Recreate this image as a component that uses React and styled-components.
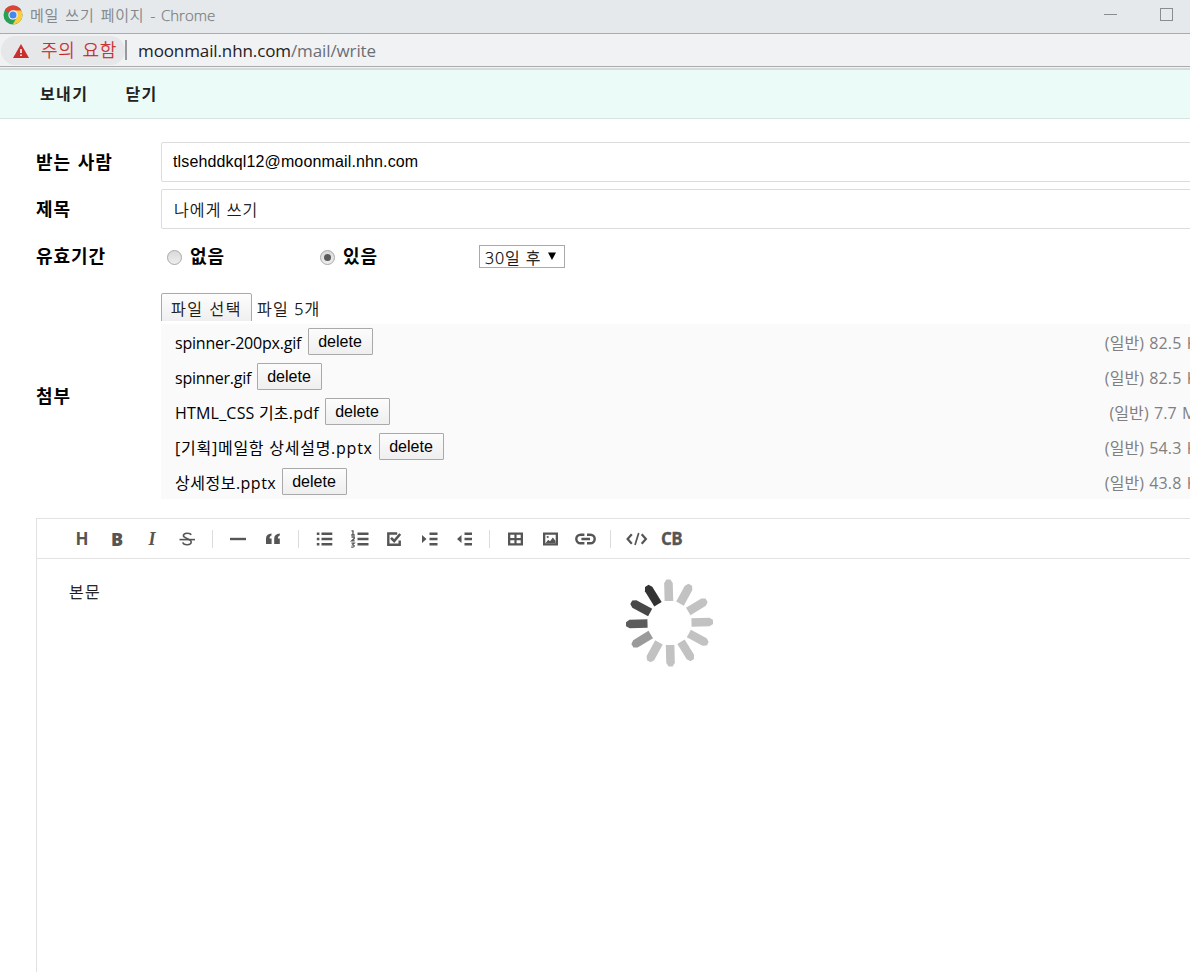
import React from "react";
import styled, { createGlobalStyle } from "styled-components";

const GlobalStyle = createGlobalStyle`
  *, *::before, *::after { box-sizing: border-box; }
  html, body { margin: 0; height: 100%; overflow: hidden; background: #fff; }
  body { font-family: "Open Sans", "Noto Sans CJK KR", sans-serif; color: #000; font-size: 16px; }
`;

const Viewport = styled.div`
  width: 100%;
  height: 972px;
  overflow: hidden;
`;

const Window = styled.div`
  display: flex;
  flex-direction: column;
  width: 1250px;
  height: 100%;
`;

const Label = styled.span`
  display: block;
  flex: none;
  white-space: pre;
  line-height: 24px;
  font-size: ${(p) => p.$size || 16}px;
  font-weight: ${(p) => p.$weight || 400};
  color: ${(p) => p.$color || "inherit"};
  letter-spacing: ${(p) => p.$ls || 0}px;
  word-spacing: ${(p) => p.$ws || 0}px;
  -webkit-text-stroke: ${(p) => (p.$weight === 300 ? 0.25 : 0)}px currentColor;
`;

const TitleBar = styled.div`
  display: flex;
  align-items: center;
  flex: none;
  height: 34px;
  padding: 0 0 4px 3px;
  background: #e5e9ec;
  border-bottom: 1px solid #ababad;
`;

const WindowTitle = styled(Label)`
  margin-left: 7px;
`;

const AppName = styled.span`
  letter-spacing: 0;
`;

const WindowButtons = styled.div`
  display: flex;
  align-items: center;
  gap: 43px;
  margin-left: auto;
  padding-right: 77px;
`;

const Minimize = styled.span`
  width: 13px;
  height: 1px;
  background: #8a8d8f;
`;

const Maximize = styled.span`
  width: 13px;
  height: 13px;
  border: 1px solid #8a8d8f;
`;

const AddressBar = styled.div`
  display: flex;
  align-items: center;
  flex: none;
  height: 33px;
  background: #f1f2f4;
  border-bottom: 1px solid #ababad;
`;

const Warning = styled.div`
  display: flex;
  align-items: center;
  width: 124px;
  height: 29px;
  margin-left: 1px;
  padding: 2px 0 0 12px;
  border-radius: 15px;
  background: #e6e7e9;
`;

const WarningText = styled(Label)`
  margin: -3px 0 0 12px;
`;

const Divider = styled.span`
  width: 2px;
  height: 20px;
  margin-right: 11px;
  background: #97989b;
`;

const Address = styled(Label)`
  padding-top: 2px;
`;

const Path = styled.span`
  color: #6b6e72;
`;

const ChromeEdge = styled.div`
  flex: none;
  height: 3px;
  background: #d6dadb;
  border-top: 1px solid #f1f2f4;
`;

const ActionBar = styled.nav`
  display: flex;
  align-items: center;
  flex: none;
  gap: 37px;
  height: 49px;
  padding-left: 40px;
  background: #ebfbf8;
  border-bottom: 1px solid #d5e6e2;
`;

const Form = styled.form`
  display: flex;
  flex-direction: column;
  flex: none;
  gap: 7px;
  padding: 23px 0 0 36px;
`;

const FormRow = styled.div`
  display: grid;
  grid-template-columns: 125px 1fr;
  align-items: center;
  min-height: 40px;
`;

const AttachmentRow = styled(FormRow)`
  margin-top: 10px;
`;

const Field = styled.div`
  display: flex;
  align-items: center;
  height: 40px;
  padding: ${(p) => (p.$korean ? "2px 0 0 12px" : "0 0 0 11px")};
  border: 1px solid #dcdcdc;
  border-radius: 2px;
`;

const EmailText = styled(Label)`
  font-family: "Liberation Sans", sans-serif;
`;

const Options = styled.div`
  display: flex;
  align-items: center;
  height: 40px;
`;

const Option = styled.div`
  display: flex;
  align-items: center;
  gap: 8px;
  width: 153px;
  padding-left: 6px;
`;

const Radio = styled.span`
  display: grid;
  place-items: center;
  width: 15px;
  height: 15px;
  margin-top: 2px;
  border: 1px solid #a9a9a9;
  border-radius: 50%;
  background: linear-gradient(#d9d9d9, #eeeeee);
  &::after {
    content: "";
    width: 7px;
    height: 7px;
    border-radius: 50%;
    background: ${(p) => (p.$on ? "#5a5a5a" : "transparent")};
  }
`;

const Select = styled.div`
  display: flex;
  align-items: flex-start;
  justify-content: space-between;
  width: 86px;
  height: 23px;
  margin-left: 12px;
  padding: 0 8px 0 5px;
  border: 1px solid #a9a9a9;
`;

const SelectArrow = styled.svg`
  margin-top: 6px;
`;

const Attachments = styled.div`
  display: flex;
  flex-direction: column;
`;

const FilePicker = styled.div`
  display: flex;
  gap: 5px;
  height: 28px;
  margin-bottom: 3px;
  overflow: hidden;
`;

const PickButton = styled.div`
  flex: none;
  width: 91px;
  height: 32px;
  padding: 3px 0 0 9px;
  border: 1px solid #a9a9a9;
  border-radius: 2px;
  background: linear-gradient(#fdfdfd, #eeeeee);
`;

const FileCount = styled(Label)`
  padding-top: 4px;
`;

const FileList = styled.ul`
  margin: 0;
  padding: 0;
  list-style: none;
  background: #fafafa;
`;

const FileRow = styled.li`
  display: flex;
  height: 35px;
  padding: 0 43px 0 14px;
`;

const FileName = styled(Label)`
  width: ${(p) => p.$w}px;
  padding-top: 7px;
`;

const DeleteButton = styled.button`
  width: 65px;
  height: 27px;
  margin-top: 4px;
  padding: 0 1px 0 0;
  border: 1px solid #a9a9a9;
  border-radius: 1px;
  background: linear-gradient(#fcfcfc, #efefef);
  font: 16px "Liberation Sans", sans-serif;
  color: #000;
`;

const FileSize = styled(Label)`
  margin-left: auto;
  padding-top: 7px;
`;

const Editor = styled.section`
  flex: 1;
  margin: 19px 0 0 36px;
  border: 1px solid #e2e2e2;
  border-bottom: 0;
`;

const Toolbar = styled.div`
  display: flex;
  align-items: center;
  height: 40px;
  padding-left: 27px;
  border-bottom: 1px solid #e2e2e2;
`;

const Tool = styled.span`
  display: grid;
  place-items: center;
  flex: none;
  width: 35px;
  height: 24px;
  padding-left: ${(p) => (p.$letter ? 1 : 0)}px;
  color: #555;
  font: ${(p) => p.$font};
  line-height: 24px;
`;

const Gap = styled.span`
  width: 1px;
  height: 18px;
  margin: 0 7px 0 8px;
  background: #dcdcdc;
`;

const Canvas = styled.div`
  display: flex;
  padding: 20px 0 0 32px;
`;

const BodyText = styled(Label)`
  width: 556px;
  padding-top: 1px;
`;

const ChromeLogo = () => (
  <svg width="20" height="20" viewBox="0 0 20 20">
    <circle cx="10" cy="10" r="9.5" fill="#2a9f57" />
    <path d="M10 10 L1.8 5.2 A9.5 9.5 0 0 1 18.3 5.4 Z" fill="#dc4437" />
    <path d="M10 5.5 H18.3 A9.5 9.5 0 0 1 9.7 19.5 L14 12 Z" fill="#fdcb3e" />
    <circle cx="10" cy="10" r="4.7" fill="#f1f1f1" />
    <circle cx="10" cy="10" r="3.5" fill="#4786ee" />
  </svg>
);

const WarningIcon = () => (
  <svg width="16" height="14" viewBox="0 0 16 14">
    <path d="M8 0 L16 14 H0 Z" fill="#c9302c" />
    <path d="M7.2 5 H8.8 V9 H7.2 Z M7.2 10.5 H8.8 V12 H7.2 Z" fill="#fff" />
  </svg>
);

const Glyph = ({ children }) => (
  <svg width="24" height="24" viewBox="-12 -12 24 24" fill="currentColor">
    {children}
  </svg>
);

const glyphs = {
  strike: (
    <>
      <path d="M4 -4 C3.4 -6.4 -3.6 -6.6 -3.6 -3.2 C-3.6 -0.4 4.2 -0.6 4.2 3 C4.2 6.6 -3.6 6.6 -4.2 3.4" fill="none" stroke="currentColor" strokeWidth="1.6" />
      <path d="M-7.5 -0.2 H8 V1.4 H-7.5 Z" />
    </>
  ),
  rule: <path d="M-8 -1.2 H8 V1.2 H-8 Z" />,
  quote: (
    <path d="M-1.5 -5.5 V-3.6 C-3 -3.2 -3.4 -2 -3.4 -0.6 H-1.4 V5 H-7 V-0.6 C-7 -3.4 -5 -5.3 -1.5 -5.5 Z M6.8 -5.5 V-3.6 C5.3 -3.2 4.9 -2 4.9 -0.6 H6.8 V5 H1.2 V-0.6 C1.2 -3.4 3.2 -5.3 6.8 -5.5 Z" />
  ),
  ul: <path d="M-7.2 -6.5 h2.6 v2.6 h-2.6z M-7.2 -1.3 h2.6 v2.6 h-2.6z M-7.2 3.9 h2.6 v2.6 h-2.6z M-2.5 -6.5 h10.8 v2.6 h-10.8z M-2.5 -1.3 h10.8 v2.6 h-10.8z M-2.5 3.9 h10.8 v2.6 h-10.8z" />,
  ol: (
    <>
      <path d="M-1.5 -6.5 h11 v2.6 h-11z M-1.5 -1.3 h11 v2.6 h-11z M-1.5 3.9 h11 v2.6 h-11z" />
      <path d="M-7.5 -8.2 h1.5 v4.4 M-7.8 -4 h3.6 M-7.5 -2 h2.7 v1.6 l-2.5 2.2 h3 M-7.5 4.2 h2.7 l-1.6 1.7 q2 0.2 1.4 1.7 q-1 1 -2.7 0.2" fill="none" stroke="currentColor" strokeWidth="1.3" />
    </>
  ),
  task: (
    <>
      <path d="M3.2 -5.5 H-5.7 V5.7 H5.7 V1.5" fill="none" stroke="currentColor" strokeWidth="2.4" />
      <path d="M-3 -1.2 L0.2 2 L6.2 -5" fill="none" stroke="currentColor" strokeWidth="2.6" />
    </>
  ),
  indent: <path d="M-7 -4 L-2.5 0 L-7 4 z M0.5 -6.5 h8 v2.6 h-8z M0.5 -1.3 h8 v2.6 h-8z M0.5 3.9 h8 v2.6 h-8z" />,
  outdent: <path d="M-2.5 -4 L-7 0 L-2.5 4 z M0.5 -6.5 h7.5 v2.6 h-7.5z M0.5 -1.3 h7.5 v2.6 h-7.5z M0.5 3.9 h7.5 v2.6 h-7.5z" />,
  table: <path fillRule="evenodd" d="M-7 -6.5 H8 V6.5 H-7 Z M-4.7 -4.2 V-1 H-0.6 V-4.2 Z M1.6 -4.2 V-1 H5.7 V-4.2 Z M-4.7 1.2 V4.2 H-0.6 V1.2 Z M1.6 1.2 V4.2 H5.7 V1.2 Z" />,
  image: (
    <g transform="translate(0.5 0)">
      <path fillRule="evenodd" d="M-7.5 -6.5 H7.5 V6.5 H-7.5 Z M-5.2 -4.2 V4.2 H5.2 V-4.2 Z" />
      <path d="M-5 4.2 L-2.3 0.8 L-0.5 2.2 L2.4 -1.6 L5 2 V4.2 Z" />
      <circle cx="-2.8" cy="-2" r="1.1" />
    </g>
  ),
  link: <path d="M-0.6 -4.3 H-4.4 A4.3 4.3 0 0 0 -4.4 4.3 H-0.6 M2 -4.3 H5.4 A4.3 4.3 0 0 1 5.4 4.3 H2 M-3.6 0 H5" fill="none" stroke="currentColor" strokeWidth="2.4" />,
  code: (
    <>
      <path d="M-4.2 -4.8 L-8.4 0 L-4.2 4.8 M5.7 -4.8 L9.9 0 L5.7 4.8" fill="none" stroke="currentColor" strokeWidth="2.2" />
      <path d="M2.7 -6 L-1 6" stroke="currentColor" strokeWidth="1.7" />
    </>
  ),
};

const Code = styled.span`
  letter-spacing: -0.7px;
  padding-left: 1px;
  -webkit-text-stroke: 0.3px currentColor;
`;

const tools = [
  { text: "H", font: "700 17px 'Open Sans', sans-serif" },
  { text: "B", font: "800 18px 'Open Sans', sans-serif" },
  { text: "I", font: "italic 700 18px 'Liberation Serif', serif" },
  { icon: "strike" },
  null,
  { icon: "rule" },
  { icon: "quote" },
  null,
  { icon: "ul" },
  { icon: "ol" },
  { icon: "task" },
  { icon: "indent" },
  { icon: "outdent" },
  null,
  { icon: "table" },
  { icon: "image" },
  { icon: "link" },
  null,
  { icon: "code" },
  { text: <Code>CB</Code>, font: "700 17px 'Open Sans', sans-serif" },
];

const files = [
  { name: "spinner-200px.gif", w: 133, ls: -0.2, size: "82.5 KB" },
  { name: "spinner.gif", w: 82, ls: -0.25, size: "82.5 KB" },
  { name: "HTML_CSS 기초.pdf", w: 150, ls: 0.2, size: "7.7 MB" },
  { name: "[기획]메일함 상세설명.pptx", w: 204, ls: 0.75, size: "54.3 KB" },
  { name: "상세정보.pptx", w: 107, ls: 0.5, size: "43.8 KB" },
];

const spokes = ["#c2c2c2", "#c2c2c2", "#c2c2c2", "#c2c2c2", "#c2c2c2", "#c2c2c2", "#c2c2c2", "#c2c2c2", "#9a9a9a", "#5c5c5c", "#484848", "#333333"];

const Spinner = () => (
  <svg width="88" height="88" viewBox="-44.5 -44 88 88">
    {spokes.map((color, i) => (
      <path
        key={i}
        d="M-4.3 -22 V-40 L-2 -43.5 H2 L4.3 -40 V-22 Z"
        fill={color}
        transform={`rotate(${i * 30 - 1.5})`}
      />
    ))}
  </svg>
);

const FormLabel = ({ children }) => (
  <Label $size={18} $weight={700} $ls={0.95} $ws={1}>{children}</Label>
);

export default function App() {
  return (
    <Viewport>
      <GlobalStyle />
      <Window>
        <TitleBar>
          <ChromeLogo />
          <WindowTitle $size={15} $weight={300} $color="#7d8082" $ls={0.75} $ws={1.6}>
            메일 쓰기 페이지 <AppName>- Chrome</AppName>
          </WindowTitle>
          <WindowButtons>
            <Minimize />
            <Maximize />
          </WindowButtons>
        </TitleBar>
        <AddressBar>
          <Warning>
            <WarningIcon />
            <WarningText $size={18} $weight={300} $color="#c5221f" $ls={0.6} $ws={2}>주의 요함</WarningText>
          </Warning>
          <Divider />
          <Address $size={17} $color="#202124" $ls={-0.11}>
            moonmail.nhn.com<Path>/mail/write</Path>
          </Address>
        </AddressBar>
        <ChromeEdge />
        <ActionBar>
          <Label $weight={600} $color="#222" $ls={1.4}>보내기</Label>
          <Label $weight={600} $color="#222" $ls={1.4}>닫기</Label>
        </ActionBar>
        <Form>
          <FormRow>
            <FormLabel>받는 사람</FormLabel>
            <Field>
              <EmailText $ls={0.14}>tlsehddkql12@moonmail.nhn.com</EmailText>
            </Field>
          </FormRow>
          <FormRow>
            <FormLabel>제목</FormLabel>
            <Field $korean>
              <Label $weight={300} $ls={1.1}>나에게 쓰기</Label>
            </Field>
          </FormRow>
          <FormRow>
            <FormLabel>유효기간</FormLabel>
            <Options>
              <Option>
                <Radio />
                <FormLabel>없음</FormLabel>
              </Option>
              <Option>
                <Radio $on />
                <FormLabel>있음</FormLabel>
              </Option>
              <Select>
                <Label $weight={300} $ls={0.9}>30일 후</Label>
                <SelectArrow width="8" height="8" viewBox="0 0 8 8">
                  <path d="M0 0.5 H8 L4 8 Z" />
                </SelectArrow>
              </Select>
            </Options>
          </FormRow>
          <AttachmentRow>
            <FormLabel>첨부</FormLabel>
            <Attachments>
              <FilePicker>
                <PickButton>
                  <Label $weight={300} $ls={1.6}>파일 선택</Label>
                </PickButton>
                <FileCount $weight={300} $ls={1.2}>파일 5개</FileCount>
              </FilePicker>
              <FileList>
                {files.map((file) => (
                  <FileRow key={file.name}>
                    <FileName $w={file.w} $ls={file.ls}>{file.name}</FileName>
                    <DeleteButton type="button">delete</DeleteButton>
                    <FileSize $color="#808080" $ls={0.1} $ws={1}>{`(일반) ${file.size}`}</FileSize>
                  </FileRow>
                ))}
              </FileList>
            </Attachments>
          </AttachmentRow>
        </Form>
        <Editor>
          <Toolbar>
            {tools.map((tool, i) =>
              tool ? (
                <Tool key={i} $font={tool.font || "inherit"} $letter={!tool.icon}>
                  {tool.icon ? <Glyph>{glyphs[tool.icon]}</Glyph> : tool.text}
                </Tool>
              ) : (
                <Gap key={i} />
              )
            )}
          </Toolbar>
          <Canvas>
            <BodyText $weight={300} $ls={1.3}>본문</BodyText>
            <Spinner />
          </Canvas>
        </Editor>
      </Window>
    </Viewport>
  );
}
